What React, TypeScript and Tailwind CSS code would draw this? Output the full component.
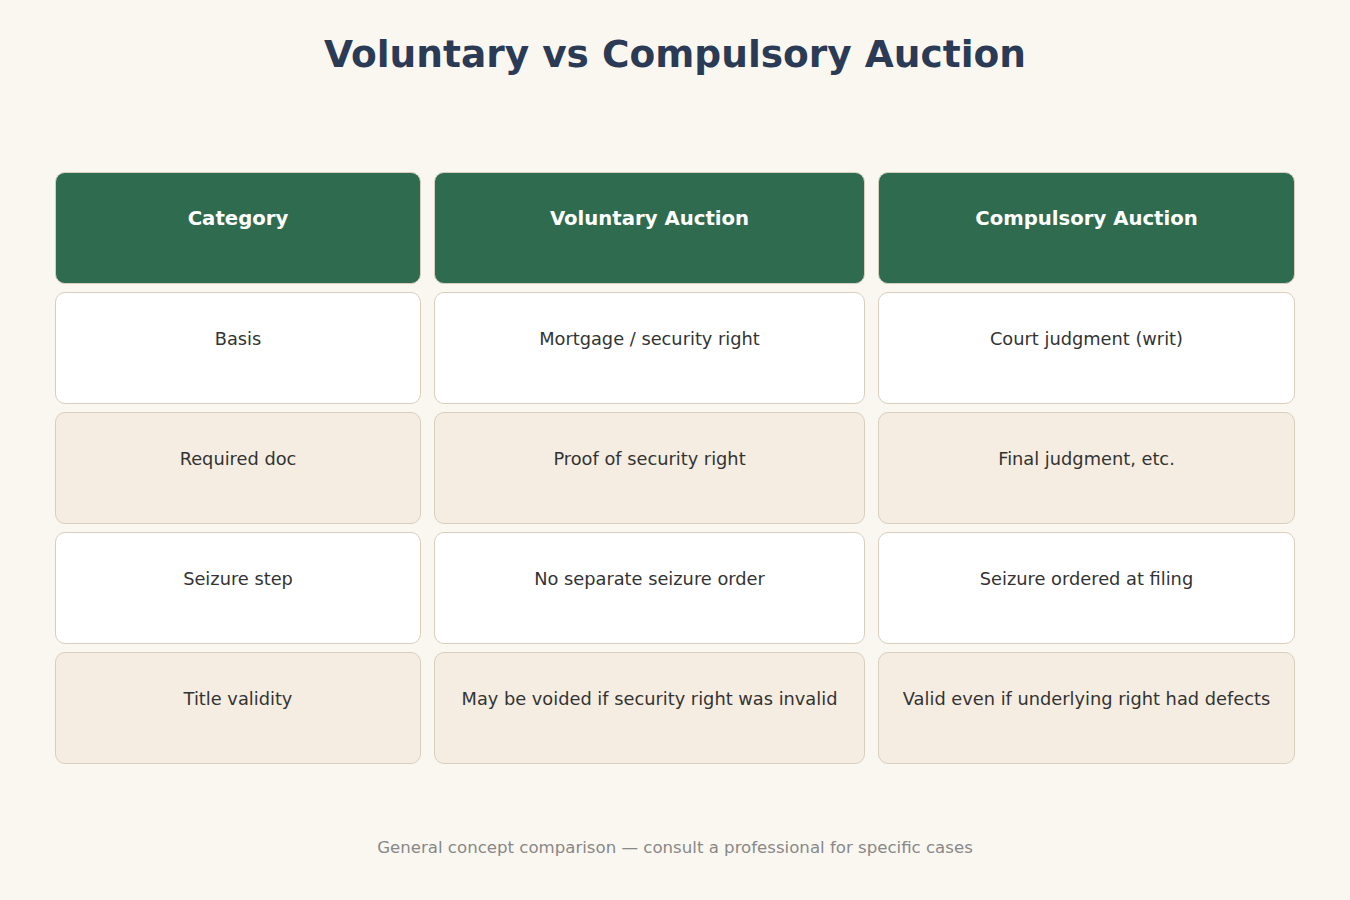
import React from "react";

const rows = [
  ["Basis", "Mortgage / security right", "Court judgment (writ)"],
  ["Required doc", "Proof of security right", "Final judgment, etc."],
  ["Seizure step", "No separate seizure order", "Seizure ordered at filing"],
  ["Title validity", "May be voided if security right was invalid", "Valid even if underlying right had defects"],
];

const headers = ["Category", "Voluntary Auction", "Compulsory Auction"];

export default function App() {
  return (
    <div
      className="w-[1350px] h-[900px] bg-[#faf7f1] flex flex-col items-center"
      style={{ fontFamily: '"DejaVu Sans", Verdana, sans-serif' }}
    >
      <h1 className="mt-[31px] text-[37.5px] leading-[46px] font-bold text-[#2b3a55]">
        Voluntary vs Compulsory Auction
      </h1>
      <div className="mt-[95px] grid grid-cols-[366px_431px_417px] gap-x-[13px] gap-y-[8px]">
        {headers.map((h) => (
          <div
            key={h}
            className="h-[112px] rounded-[10px] border border-[#d8cebe] bg-[#2e6b4f] pt-[34px] text-center text-[19.7px] leading-[24px] font-bold text-white"
          >
            {h}
          </div>
        ))}
        {rows.map((r, i) =>
          r.map((c, j) => (
            <div
              key={i + "-" + j}
              className={
                "h-[112px] rounded-[10px] border border-[#d8cebe] pt-[35px] text-center text-[17.8px] leading-[22px] text-[#333333] " +
                (i % 2 === 0 ? "bg-white" : "bg-[#f5ede1]")
              }
            >
              {c}
            </div>
          ))
        )}
      </div>
      <div className="mt-[73px] text-[16.6px] leading-[22px] text-[#888888]">
        General concept comparison — consult a professional for specific cases
      </div>
    </div>
  );
}
